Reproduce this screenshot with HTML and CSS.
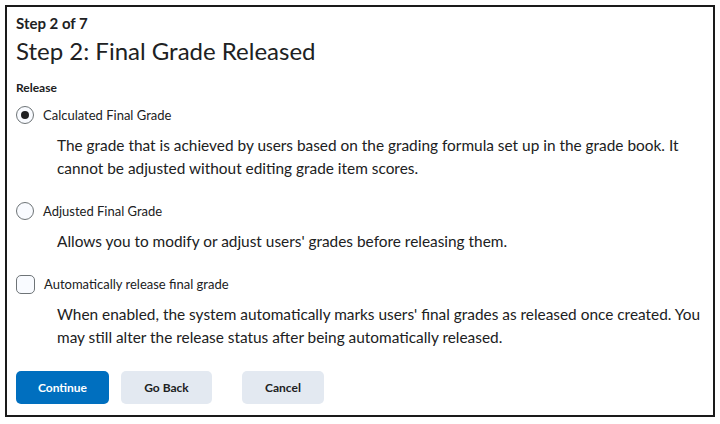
FILE: index.html
```html
<!DOCTYPE html>
<html>
<head>
<meta charset="utf-8">
<link rel="stylesheet" href="styles.css">
</head>
<body>
<div class="frame">
  <div class="step">Step 2 of 7</div>
  <h1 class="title">Step 2: Final Grade Released</h1>
  <div class="group-label">Release</div>

  <div class="option">
    <span class="radio checked"><span class="dot"></span></span>
    <span class="opt-label">Calculated Final Grade</span>
  </div>
  <p class="desc">The grade that is achieved by users based on the grading formula set up in the grade book. It cannot be adjusted without editing grade item scores.</p>

  <div class="option">
    <span class="radio"></span>
    <span class="opt-label">Adjusted Final Grade</span>
  </div>
  <p class="desc">Allows you to modify or adjust users' grades before releasing them.</p>

  <div class="option">
    <span class="checkbox"></span>
    <span class="opt-label">Automatically release final grade</span>
  </div>
  <p class="desc">When enabled, the system automatically marks users' final grades as released once created. You may still alter the release status after being automatically released.</p>

  <div class="buttons">
    <button class="btn primary">Continue</button>
    <button class="btn">Go Back</button>
    <button class="btn cancel">Cancel</button>
  </div>
</div>
</body>
</html>
```
FILE: styles.css
```css
html, body {
  margin: 0;
  padding: 0;
  background: #fff;
}
body {
  font-family: Lato, "Liberation Sans", sans-serif;
  color: #202122;
}
.frame {
  margin: 5px;
  border: 2px solid #1a1a1a;
  padding: 0 9px;
  box-sizing: border-box;
  width: 710px;
  height: 412px;
}
.step {
  font-weight: 700;
  font-size: 15px;
  line-height: 18px;
  margin-top: 7px;
}
.title {
  font-weight: 400;
  font-size: 24px;
  line-height: 30px;
  margin: 4px 0 0 0;
}
.group-label {
  font-weight: 700;
  font-size: 12px;
  line-height: 16px;
  margin-top: 14px;
}
.option {
  display: flex;
  align-items: center;
  gap: 9px;
  height: 20px;
  margin-top: 9px;
}
.desc + .option {
  margin-top: 21px;
}
.radio {
  width: 18px;
  height: 18px;
  border: 1px solid #6e7477;
  border-radius: 50%;
  box-sizing: border-box;
  display: flex;
  align-items: center;
  justify-content: center;
  background: #f9fbff;
}
.radio .dot {
  width: 8px;
  height: 8px;
  border-radius: 50%;
  background: #202122;
}
.checkbox {
  width: 19px;
  height: 19px;
  border: 1px solid #6e7477;
  border-radius: 5px;
  box-sizing: border-box;
  background: #f9fbff;
}
.opt-label {
  font-size: 13px;
}
.desc {
  font-size: 15.4px;
  line-height: 23px;
  margin: 9px 0 0 41px;
}
.buttons {
  display: flex;
  gap: 12px;
  margin-top: 22px;
}
.btn {
  font-family: Lato, "Liberation Sans", sans-serif;
  font-weight: 700;
  font-size: 12px;
  color: #202122;
  background: #e3e9f1;
  border: none;
  border-radius: 5px;
  height: 33px;
  width: 91px;
}
.btn.primary {
  background: #006fbf;
  color: #fff;
  width: 93px;
}
.btn.cancel {
  margin-left: 18px;
  width: 82px;
}
```
